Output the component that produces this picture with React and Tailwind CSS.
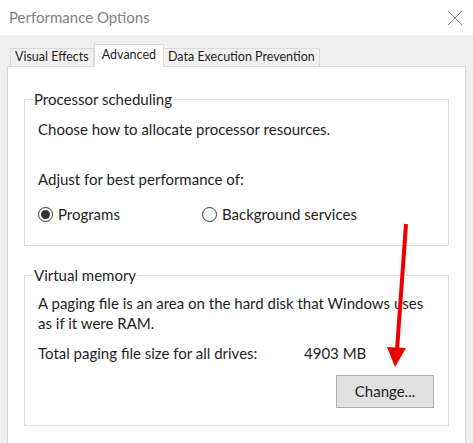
import React from 'react'

const font = { fontFamily: 'Lato, "Noto Sans", sans-serif' }

function Radio({ checked, label }) {
  return (
    <div className="flex items-center gap-[5px]">
      <span className="w-[15px] h-[15px] rounded-full border border-[#333] bg-white flex items-center justify-center">
        {checked && <span className="w-[9px] h-[9px] rounded-full bg-[#333]" />}
      </span>
      <span>{label}</span>
    </div>
  )
}

function Group({ title, className, children }) {
  return (
    <fieldset className={'border border-[#dcdcdc] mx-[16px] ' + className}>
      <legend className="ml-[-5px] px-[1px] leading-[20px]">{title}</legend>
      {children}
    </fieldset>
  )
}

export default function App() {
  return (
    <div className="relative w-[473px] h-[443px] overflow-hidden bg-[#f0f0f0] text-[15px] text-[#1e1e1e]" style={font}>
      <div className="h-[35px] bg-white flex items-center justify-between pl-[9px] pr-[10px]">
        <span className="text-[15px] text-[#808080]">Performance Options</span>
        <svg width="16" height="16" viewBox="0 0 16 16" className="text-[#8a8a8a]">
          <path d="M1 1 L15 15 M15 1 L1 15" stroke="currentColor" strokeWidth="1" />
        </svg>
      </div>

      <div className="px-[7px]">
        <div className="flex items-end h-[31px] pl-[3px] text-[12.5px]">
          <div className="h-[18px] px-[4px] border border-b-0 border-[#d9d9d9] bg-[#f0f0f0] flex items-center">Visual Effects</div>
          <div className="h-[23px] px-[7px] border border-b-0 border-[#d9d9d9] bg-white flex items-start pt-[1px] -mb-px relative z-10">Advanced</div>
          <div className="h-[18px] px-[4px] border border-b-0 border-l-0 border-[#d9d9d9] bg-[#f0f0f0] flex items-center">Data Execution Prevention</div>
        </div>

        <div className="bg-white border border-[#d9d9d9] h-[400px] pt-[22px]">
          <Group title="Processor scheduling" className="pl-[13px] pb-[21px]">
            <div className="mt-[10px] leading-[20px]">Choose how to allocate processor resources.</div>
            <div className="mt-[30px] leading-[20px]">Adjust for best performance of:</div>
            <div className="mt-[15px] flex leading-[20px]">
              <div className="w-[164px]"><Radio checked label="Programs" /></div>
              <Radio label="Background services" />
            </div>
          </Group>

          <Group title="Virtual memory" className="mt-[19px] pl-[13px] pb-[17px]">
            <div className="mt-[8px] leading-[20px] whitespace-nowrap">
              A paging file is an area on the hard disk that Windows uses<br />as if it were RAM.
            </div>
            <div className="mt-[10px] flex leading-[20px]">
              <span className="w-[266px]">Total paging file size for all drives:</span>
              <span>4903 MB</span>
            </div>
            <div className="mt-[12px] flex justify-end pr-[14px]">
              <button className="w-[98px] h-[33px] bg-[#e1e1e1] border border-[#adadad] text-[15px]">Change...</button>
            </div>
          </Group>
        </div>
      </div>

      <svg className="absolute left-0 top-0 pointer-events-none" width="473" height="443" viewBox="0 0 473 443">
        <line x1="406" y1="224" x2="397" y2="350" stroke="#ee0000" strokeWidth="4" />
        <polygon points="387,347 406,348 395,367" fill="#ee0000" />
      </svg>
    </div>
  )
}
